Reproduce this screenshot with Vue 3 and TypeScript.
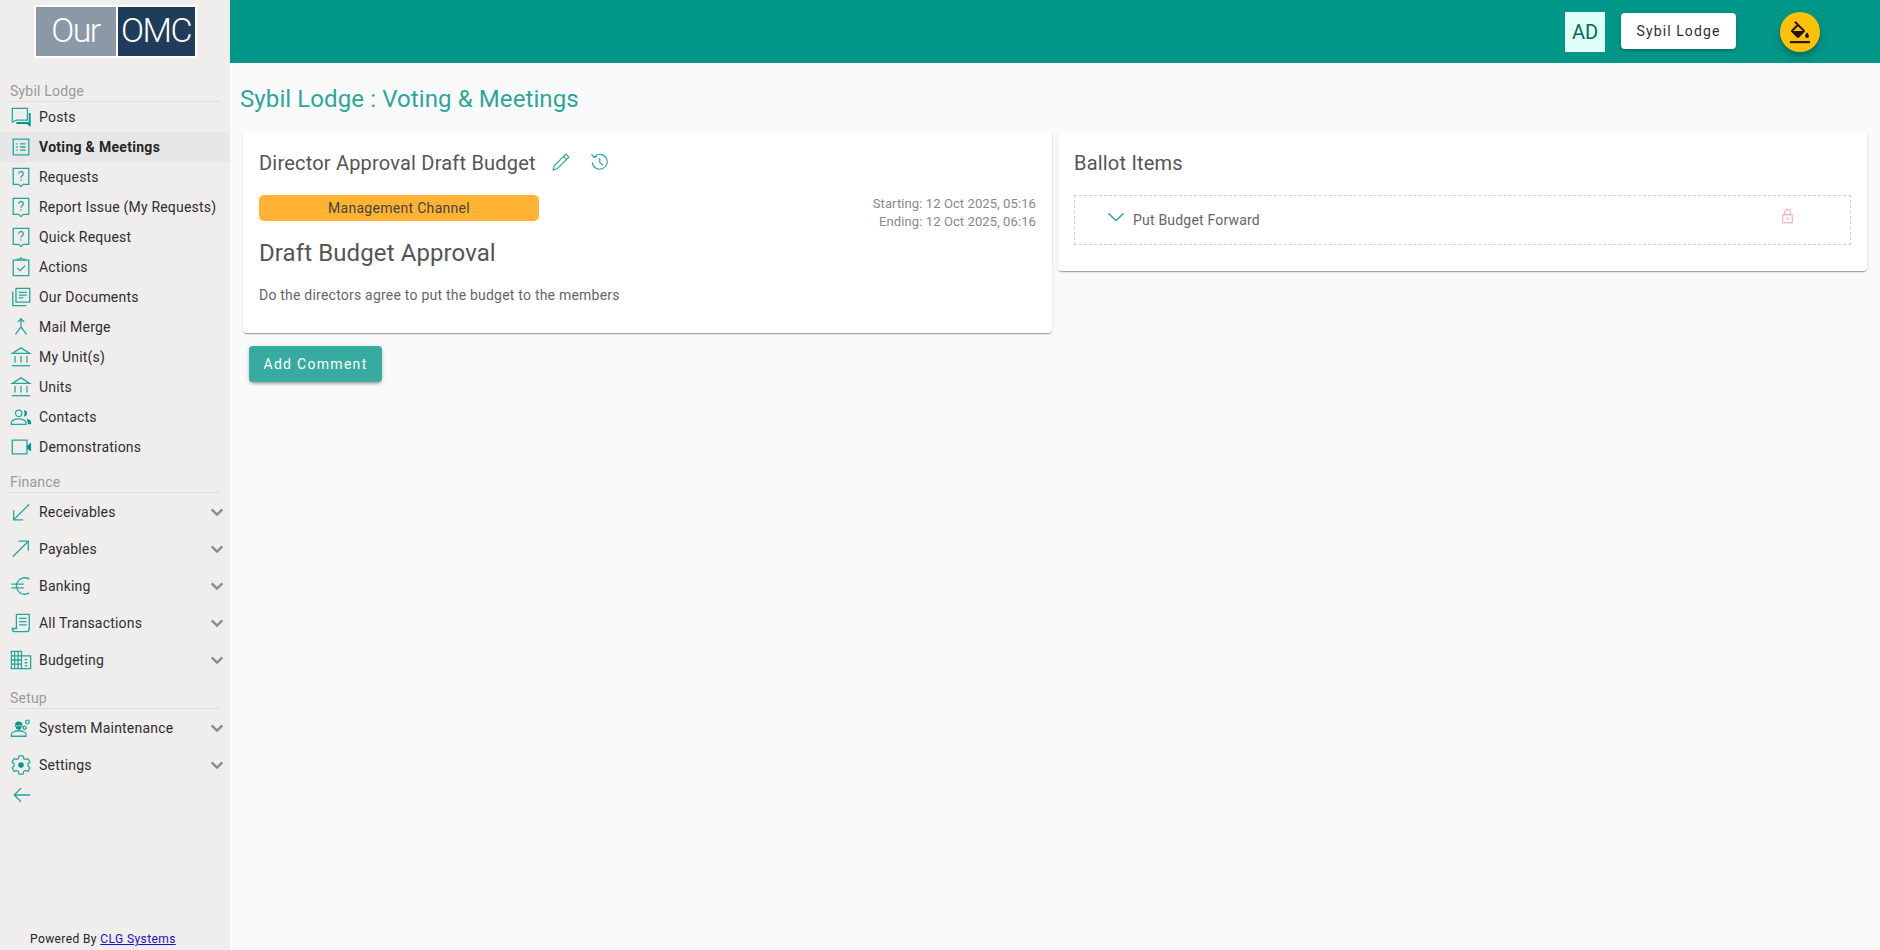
<script setup lang="ts">
interface NavItem {
  label: string
  icon: string
  active?: boolean
  expandable?: boolean
}

interface NavSection {
  title: string
  items: NavItem[]
}

// stroked outlines and solid parts for each sidebar icon, on a 24 box
const icons: Record<string, { line: string[]; solid?: string[] }> = {
  posts: {
    line: ['M2.500 2.500h16.500v13H7l-4.500 2z'],
    solid: ['M20.500 7.500h2v15.500L18.500 19.500H7V17.500h13.500z'],
  },
  list: {
    line: [
      'M3.500 3.500h17v17h-17z',
      'M11 8.500h6M11 12h6M11 15.500h6',
      'M7 8.500h1.500M7 12h1.500M7 15.500h1.500',
    ],
  },
  request: {
    line: [
      'M3.500 2.500h17v17.500h-6L12 22.500 9.500 20h-6z',
      'M9.500 8.500a2.500 2.500 0 1 1 3.700 2.200c-.9.5-1.200 1-1.200 2',
      'M12 14.500v1.500',
    ],
  },
  actions: {
    line: [
      'M3.500 4.500h17v17h-17z',
      'M8 4.500v-1h3l1-1.500 1 1.500h3v1',
      'M8 13l3 3 5.500-5.500',
    ],
  },
  documents: {
    line: ['M6.500 2.500h15v15h-15z', 'M3 6v15.500h15', 'M9.500 7h9M9.500 10h9M9.500 13h5'],
  },
  merge: {
    line: ['M12 3v9M8.500 6.500 12 3l3.500 3.500', 'M12 12l-6 8M12 12l6 8'],
  },
  unit: {
    line: ['M12 2 2.500 8h19z', 'M5.500 11v7M12 11v7M18.500 11v7', 'M2 21.500h20'],
  },
  contacts: {
    line: [
      'M9.500 4.500a3.500 3.500 0 1 1 0 7 3.500 3.500 0 0 1 0-7z',
      'M1.500 20v-2c0-2.500 4-4 8-4s8 1.500 8 4v2z',
    ],
    solid: ['M15 4.500a3.500 3.500 0 0 1 0 7c1.200-2 1.200-5 0-7z', 'M18 14c3 .5 5 1.800 5 4v2h-3.500c0-2.500-.5-4.500-1.500-6z'],
  },
  video: {
    line: ['M2.500 4.500h16v15h-16z'],
    solid: ['M18.500 10.500 23 7v10l-4.500-3.500z'],
  },
  receivables: {
    line: ['M21 3.500 4 20.500', 'M4 10v10.500h10.500'],
  },
  payables: {
    line: ['M3 20.500 20 3.500', 'M9.500 3.500H20V14'],
  },
  euro: {
    line: [
      'M21 4.500a9 9 0 0 0-5-1.500c-5 0-9 4-9 9s4 9 9 9a9 9 0 0 0 5-1.500',
      'M1.500 10H15M1.500 14H15',
    ],
  },
  transactions: {
    line: [
      'M7 2.500h14v16',
      'M7 2.500v15.500H2.500c0 2 1 3.500 3 3.500H18c2 0 3-1.500 3-3.500',
      'M10 7h8M10 10.500h8M10 14h8',
    ],
  },
  budget: {
    line: [
      'M1.500 2.500h11v19h-11z',
      'M12.500 7.500h10v14h-10',
      'M1.500 7.500h11M1.500 12h11M1.500 16.500h11M5 2.500v19M8.800 2.500v19',
      'M16 11.500h3M16 15h3M16 18.500h3',
    ],
  },
  maintenance: {
    line: [
      'M1.500 21v-2c0-2.500 4-4 8-4s8 1.500 8 4v2z',
      'M19 3.500a2 2 0 1 1 0 4 2 2 0 0 1 0-4z',
      'M16 10a1.700 1.700 0 1 1 0 3.400 1.700 1.700 0 0 1 0-3.400z',
    ],
    solid: ['M5.500 9a4 4 0 0 1 8 0zM5 9.500h9v1H5z', 'M6.500 11h6a3 3 0 0 1-6 0z'],
  },
  settings: {
    line: [
      'M19.430 12.980c.04-.32.07-.64.07-.98s-.03-.66-.07-.98l2.110-1.650c.19-.15.24-.42.12-.64l-2-3.460c-.12-.22-.39-.3-.61-.22l-2.490 1c-.52-.4-1.080-.73-1.690-.98l-.38-2.650C14.460 2.180 14.250 2 14 2h-4c-.25 0-.46.18-.49.42l-.38 2.650c-.61.25-1.170.59-1.690.98l-2.490-1c-.23-.09-.49 0-.61.22l-2 3.460c-.13.22-.07.49.12.64l2.110 1.650c-.04.32-.07.65-.07.98s.03.66.07.98l-2.110 1.650c-.19.15-.24.42-.12.64l2 3.460c.12.22.39.3.61.22l2.490-1c.52.4 1.080.73 1.690.98l.38 2.650c.03.24.24.42.49.42h4c.25 0 .46-.18.49-.42l.38-2.650c.61-.25 1.170-.59 1.690-.98l2.490 1c.23.09.49 0 .61-.22l2-3.460c.12-.22.07-.49-.12-.64l-2.110-1.650z',
    ],
    solid: ['M12 9a3 3 0 1 1 0 6 3 3 0 0 1 0-6z'],
  },
}

const sections: NavSection[] = [
  {
    title: 'Sybil Lodge',
    items: [
      { label: 'Posts', icon: 'posts' },
      { label: 'Voting & Meetings', icon: 'list', active: true },
      { label: 'Requests', icon: 'request' },
      { label: 'Report Issue (My Requests)', icon: 'request' },
      { label: 'Quick Request', icon: 'request' },
      { label: 'Actions', icon: 'actions' },
      { label: 'Our Documents', icon: 'documents' },
      { label: 'Mail Merge', icon: 'merge' },
      { label: 'My Unit(s)', icon: 'unit' },
      { label: 'Units', icon: 'unit' },
      { label: 'Contacts', icon: 'contacts' },
      { label: 'Demonstrations', icon: 'video' },
    ],
  },
  {
    title: 'Finance',
    items: [
      { label: 'Receivables', icon: 'receivables', expandable: true },
      { label: 'Payables', icon: 'payables', expandable: true },
      { label: 'Banking', icon: 'euro', expandable: true },
      { label: 'All Transactions', icon: 'transactions', expandable: true },
      { label: 'Budgeting', icon: 'budget', expandable: true },
    ],
  },
  {
    title: 'Setup',
    items: [
      { label: 'System Maintenance', icon: 'maintenance', expandable: true },
      { label: 'Settings', icon: 'settings', expandable: true },
    ],
  },
]
</script>

<template>
  <div class="app-shell">
    <aside class="sidebar">
      <div class="logo">
        <span class="logo-our">Our</span>
        <span class="logo-omc">OMC</span>
      </div>

      <section v-for="section in sections" :key="section.title" class="nav-section">
        <div class="nav-title">{{ section.title }}</div>
        <a
          v-for="item in section.items"
          :key="item.label"
          class="nav-row"
          :class="{ active: item.active, expandable: item.expandable }"
        >
          <svg class="nav-icon" viewBox="0 0 24 24">
            <path v-for="d in icons[item.icon].line" :key="d" :d="d" class="line" />
            <path v-for="d in icons[item.icon].solid" :key="d" :d="d" class="solid" />
          </svg>
          <span class="nav-label">{{ item.label }}</span>
          <svg v-if="item.expandable" class="nav-chevron" viewBox="0 0 24 24">
            <path d="M4 8 12 16 20 8" />
          </svg>
        </a>
      </section>

      <svg class="collapse" viewBox="0 0 24 24">
        <path d="M21 12H4M11 4.500 3.500 12l7.500 7.500" />
      </svg>

      <div class="powered">Powered By <a class="powered-link">CLG Systems</a></div>
    </aside>

    <div class="main">
      <header class="toolbar">
        <div class="avatar">AD</div>
        <button class="site-button">Sybil Lodge</button>
        <button class="theme-button" aria-label="Theme">
          <svg viewBox="0 0 24 24">
            <path d="M16.560 8.940 7.620 0 6.210 1.410l2.380 2.380-5.150 5.150c-.59.59-.59 1.540 0 2.120l5.500 5.500c.29.29.68.44 1.060.44s.77-.15 1.060-.44l5.500-5.500c.59-.58.59-1.530 0-2.120zM5.210 10 10 5.210 14.790 10H5.210z" />
            <path d="M19 11.500s-2 2.170-2 3.500c0 1.100.9 2 2 2s2-.9 2-2c0-1.330-2-3.500-2-3.500z" />
            <path d="M2 20h20v2.200H2z" />
          </svg>
        </button>
      </header>

      <main class="content">
        <h1 class="page-title">Sybil Lodge : Voting &amp; Meetings</h1>

        <div class="columns">
          <div class="left-column">
            <div class="card">
              <div class="card-heading">
                <h2>Director Approval Draft Budget</h2>
                <svg class="heading-icon" viewBox="0 0 24 24">
                  <path d="M1.500 22.500l1.500-5.500L18.500 1.500l4 4L7 21z" />
                  <path d="M15.500 4.500l4 4" />
                </svg>
                <svg class="heading-icon history" viewBox="0 0 24 24">
                  <path d="M5.500 5A10 10 0 1 1 3 12.500" />
                  <path d="M2 1.500 5 5.800l4.500-1.300" />
                  <path d="M13 6.500v6l4.500 4" />
                </svg>
              </div>

              <div class="meta-row">
                <div class="channel">Management Channel</div>
                <div class="dates">
                  <div>Starting: 12 Oct 2025, 05:16</div>
                  <div>Ending: 12 Oct 2025, 06:16</div>
                </div>
              </div>

              <h3 class="ballot-title">Draft Budget Approval</h3>
              <p class="ballot-text">Do the directors agree to put the budget to the members</p>
            </div>

            <button class="add-comment">Add Comment</button>
          </div>

          <div class="card ballot-card">
            <div class="card-heading">
              <h2>Ballot Items</h2>
            </div>
            <div class="ballot-item">
              <svg class="item-chevron" viewBox="0 0 18 10">
                <path d="M1.500 1.500 9 8.500l7.500-7" />
              </svg>
              <span class="item-label">Put Budget Forward</span>
              <svg class="item-lock" viewBox="0 0 16 20">
                <path d="M2 8.500h12v10H2z" />
                <path d="M4.500 8.500V5a3.500 3.500 0 0 1 7 0v3.500" />
                <circle cx="8" cy="13.500" r="1" />
              </svg>
            </div>
          </div>
        </div>
      </main>
    </div>
  </div>
</template>

<style scoped>
.app-shell {
  display: flex;
  height: 950px;
  overflow: hidden;
  font-family: Roboto, "Liberation Sans", sans-serif;
  background: #fafafa;
}

.sidebar {
  width: 230px;
  flex: none;
  display: flex;
  flex-direction: column;
  background: #f0eeed;
}

.logo {
  align-self: center;
  display: flex;
  gap: 2px;
  margin-top: 5px;
  margin-bottom: 25px;
  padding: 2px;
  background: #fff;
}
.logo span {
  height: 49px;
  line-height: 47px;
  text-align: center;
  color: #fff;
  font-size: 34px;
  font-weight: 300;
  letter-spacing: -1.500px;
}
.logo-our {
  width: 80px;
  background: #8b99a6;
}
.logo-omc {
  width: 77px;
  background: #1f3d5a;
}

.nav-section {
  margin-bottom: 12px;
}
.nav-title {
  margin: 0 10px;
  height: 18px;
  line-height: 16px;
  border-bottom: 1px solid #dedede;
  font-size: 14px;
  letter-spacing: 0.2px;
  color: #9a9a9a;
}
.nav-row {
  display: flex;
  align-items: center;
  height: 30px;
  padding-left: 10px;
  color: #2d2d33;
  font-size: 14px;
  letter-spacing: 0.2px;
}
.nav-row.expandable {
  height: 37px;
}
.nav-row.active {
  background: #e7e7e7;
  font-weight: 700;
  color: #24242a;
  letter-spacing: 0.3px;
}
.nav-icon {
  width: 22px;
  height: 22px;
  margin-right: 7px;
  flex: none;
}
.nav-icon .line {
  fill: none;
  stroke: #26a69a;
  stroke-width: 1.400;
}
.nav-icon .solid {
  fill: #009688;
}
.nav-label {
  flex: 1;
  white-space: nowrap;
}
.nav-chevron {
  width: 16px;
  height: 16px;
  margin-right: 5px;
  flex: none;
}
.nav-chevron path {
  fill: none;
  stroke: #8a8a8a;
  stroke-width: 3.400;
}

.collapse {
  width: 22px;
  height: 22px;
  margin: -11px 0 0 11px;
  flex: none;
}
.collapse path {
  fill: none;
  stroke: #26a69a;
  stroke-width: 1.500;
}

.powered {
  margin-top: auto;
  margin-bottom: 3px;
  padding-left: 30px;
  font-size: 12px;
  line-height: 16px;
  letter-spacing: 0.4px;
  color: #222;
}
.powered-link {
  color: #1a0dce;
  text-decoration: underline;
}

.main {
  flex: 1;
  min-width: 0;
  display: flex;
  flex-direction: column;
}

.toolbar {
  height: 63px;
  flex: none;
  display: flex;
  align-items: center;
  background: #009688;
}
.avatar {
  width: 40px;
  height: 40px;
  margin-left: auto;
  display: flex;
  align-items: center;
  justify-content: center;
  background: #e0fff9;
  color: #00695f;
  font-size: 20px;
}
.site-button {
  width: 115px;
  height: 36px;
  margin: -2px 0 0 16px;
  border: 0;
  border-radius: 4px;
  background: #fff;
  color: #2d2d3a;
  font-family: inherit;
  font-size: 14px;
  font-weight: 400;
  letter-spacing: 1.100px;
  box-shadow: 0 3px 3px -2px rgba(0, 0, 0, 0.2), 0 2px 4px rgba(0, 0, 0, 0.14);
}
.theme-button {
  width: 40px;
  height: 40px;
  margin: 0 60px 0 44px;
  padding: 9px 8px 7px;
  border: 0;
  border-radius: 50%;
  background: #ffc107;
  box-shadow: 0 3px 5px -1px rgba(0, 0, 0, 0.2), 0 6px 10px rgba(0, 0, 0, 0.14);
}
.theme-button svg {
  display: block;
  width: 24px;
  height: 24px;
  fill: #231500;
}

.content {
  flex: 1;
  padding: 0 10px;
}
.page-title {
  margin: 20px 0 16px;
  height: 32px;
  line-height: 32px;
  font-size: 24px;
  font-weight: 400;
  letter-spacing: 0.1px;
  color: #2aa79b;
}

.columns {
  display: grid;
  grid-template-columns: 1fr 1fr;
  gap: 6px;
  align-items: start;
  padding: 0 3px;
}
.left-column {
  min-width: 0;
}
.card {
  box-sizing: border-box;
  padding: 17px 16px 16px;
  background: #fff;
  border-radius: 4px;
  box-shadow: 0 2px 1px -1px rgba(0, 0, 0, 0.2), 0 1px 1px rgba(0, 0, 0, 0.14), 0 1px 3px rgba(0, 0, 0, 0.12);
}
.ballot-card {
  min-width: 0;
  height: 140px;
}
.left-column .card {
  height: 202px;
}
.card-heading {
  display: flex;
  align-items: center;
  height: 30px;
}
.card-heading h2 {
  margin: 0;
  font-size: 20px;
  font-weight: 400;
  letter-spacing: 0.2px;
  color: #555;
}
.heading-icon {
  width: 18px;
  height: 18px;
  margin-left: 16px;
  margin-top: -3px;
  flex: none;
}
.heading-icon.history {
  margin-left: 20px;
}
.heading-icon path {
  fill: none;
  stroke: #26a69a;
  stroke-width: 1.500;
}

.meta-row {
  display: flex;
  justify-content: space-between;
  margin-top: 17px;
}
.channel {
  width: 280px;
  height: 26px;
  line-height: 26px;
  text-align: center;
  background: #ffb333;
  border-radius: 5px;
  color: #444;
  font-size: 14px;
  letter-spacing: 0.3px;
}
.dates {
  text-align: right;
  color: #888;
  font-size: 13px;
  line-height: 18px;
  letter-spacing: 0.1px;
}
.ballot-title {
  margin: 7px 0 0;
  height: 30px;
  line-height: 30px;
  font-size: 24px;
  font-weight: 400;
  letter-spacing: 0.1px;
  color: #555;
}
.ballot-text {
  margin: 17px 0 0;
  line-height: 20px;
  font-size: 14px;
  letter-spacing: 0.22px;
  color: #666;
}

.add-comment {
  display: block;
  width: 133px;
  height: 36px;
  margin: 13px 0 0 6px;
  border: 0;
  border-radius: 4px;
  background: #37ab9f;
  color: #fff;
  font-family: inherit;
  font-size: 14px;
  font-weight: 400;
  letter-spacing: 1.300px;
  box-shadow: 0 3px 3px -2px rgba(0, 0, 0, 0.2), 0 2px 3px rgba(0, 0, 0, 0.14), 0 1px 5px rgba(0, 0, 0, 0.12);
}

.ballot-item {
  box-sizing: border-box;
  display: flex;
  align-items: center;
  height: 50px;
  margin-top: 17px;
  border: 1px dashed #d0d0d0;
}
.item-chevron {
  width: 18px;
  height: 10px;
  margin: -6px 0 0 32px;
  flex: none;
}
.item-chevron path {
  fill: none;
  stroke: #26a69a;
  stroke-width: 1.500;
}
.item-label {
  flex: 1;
  margin-left: 8px;
  font-size: 14px;
  letter-spacing: 0.2px;
  color: #666;
}
.item-lock {
  width: 13px;
  height: 16px;
  margin: -8px 56px 0 0;
  flex: none;
}
.item-lock path {
  fill: none;
  stroke: #f99;
  stroke-width: 1.200;
}
.item-lock circle {
  fill: #f77;
}
</style>
